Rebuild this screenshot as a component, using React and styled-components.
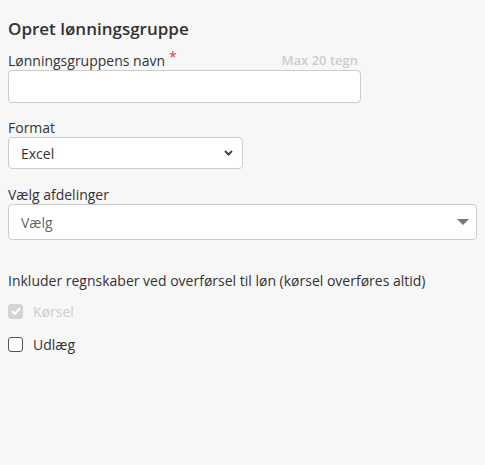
import React from "react";
import styled, { createGlobalStyle } from "styled-components";

const GlobalStyle = createGlobalStyle`
  html, body {
    margin: 0;
    padding: 0;
    background: #f7f7f7;
  }
  body {
    font-family: "Open Sans", "Liberation Sans", sans-serif;
    color: #333;
  }
`;

const Page = styled.div`
  padding: 18px 8px 40px;
  width: 485px;
  min-height: 465px;
  box-sizing: border-box;
`;

const Title = styled.h3`
  margin: 0 0 12px;
  font-size: 17px;
  font-weight: 600;
  line-height: 22px;
  color: #333;
`;

const Group = styled.div`
  width: ${(p) => p.$width || "100%"};
  margin-bottom: ${(p) => p.$mb || "16px"};
`;

const LabelRow = styled.div`
  display: flex;
  justify-content: space-between;
  align-items: flex-start;
  height: 18px;
`;

const Label = styled.label`
  font-size: 14px;
  line-height: 18px;
  color: #333;
`;

const Required = styled.span`
  color: #e53935;
  margin-left: 4px;
  font-size: 14px;
  position: relative;
  top: -4px;
`;

const Hint = styled.span`
  font-size: 13px;
  font-weight: 600;
  color: #ccc;
  line-height: 16px;
  padding-right: 3px;
`;

const TextInput = styled.input`
  display: block;
  width: 100%;
  height: 33px;
  box-sizing: border-box;
  border: 1px solid #ccc;
  border-radius: 4px;
  background: #fff;
  padding: 6px 12px;
  font-family: inherit;
  font-size: 14px;
`;

const SelectBox = styled.div`
  height: ${(p) => p.$h || "32px"};
  box-sizing: border-box;
  border: 1px solid #ccc;
  border-radius: 4px;
  background: #fff;
  display: flex;
  align-items: center;
  padding: 0 ${(p) => p.$pr || "9px"} 0 12px;
  font-size: 14px;
  color: ${(p) => (p.$muted ? "#666" : "#333")};
`;

const Value = styled.span`
  flex: 1;
`;

const Section = styled.p`
  margin: 31px 0 10px;
  font-size: 14px;
  line-height: 20px;
  color: #333;
`;

const CheckRow = styled.label`
  display: flex;
  align-items: center;
  gap: 10px;
  height: 20px;
  margin-bottom: 13px;
  font-size: 14px;
  color: ${(p) => (p.$disabled ? "#ccc" : "#333")};
`;

const Box = styled.span`
  width: 15px;
  height: 15px;
  box-sizing: border-box;
  border-radius: 3px;
  border: 1px solid ${(p) => (p.$checked ? "#d4d4d4" : "#555")};
  background: ${(p) => (p.$checked ? "#d4d4d4" : "#fff")};
  display: inline-flex;
  align-items: center;
  justify-content: center;
`;

const Chevron = () => (
  <svg width="9" height="6" viewBox="0 0 9 6">
    <path d="M1 1 L4.5 4.5 L8 1" fill="none" stroke="#444" strokeWidth="2" />
  </svg>
);

const Caret = () => (
  <svg width="12" height="6" viewBox="0 0 12 6">
    <path d="M0 0 H12 L6 6 Z" fill="#777" />
  </svg>
);

const Tick = () => (
  <svg width="10" height="8" viewBox="0 0 10 8">
    <path d="M1 4 L4 7 L9 1" fill="none" stroke="#fff" strokeWidth="2" />
  </svg>
);

export default function App() {
  return (
    <Page>
      <GlobalStyle />
      <Title>Opret lønningsgruppe</Title>

      <Group $width="353px">
        <LabelRow>
          <Label>
            Lønningsgruppens navn<Required>*</Required>
          </Label>
          <Hint>Max 20 tegn</Hint>
        </LabelRow>
        <TextInput type="text" />
      </Group>

      <Group $width="235px" $mb="17px">
        <LabelRow>
          <Label>Format</Label>
        </LabelRow>
        <SelectBox>
          <Value>Excel</Value>
          <Chevron />
        </SelectBox>
      </Group>

      <Group $mb="0">
        <LabelRow>
          <Label>Vælg afdelinger</Label>
        </LabelRow>
        <SelectBox $h="36px" $pr="7px" $muted>
          <Value>Vælg</Value>
          <Caret />
        </SelectBox>
      </Group>

      <Section>Inkluder regnskaber ved overførsel til løn (kørsel overføres altid)</Section>

      <CheckRow $disabled>
        <Box $checked>
          <Tick />
        </Box>
        Kørsel
      </CheckRow>
      <CheckRow>
        <Box />
        Udlæg
      </CheckRow>
    </Page>
  );
}
